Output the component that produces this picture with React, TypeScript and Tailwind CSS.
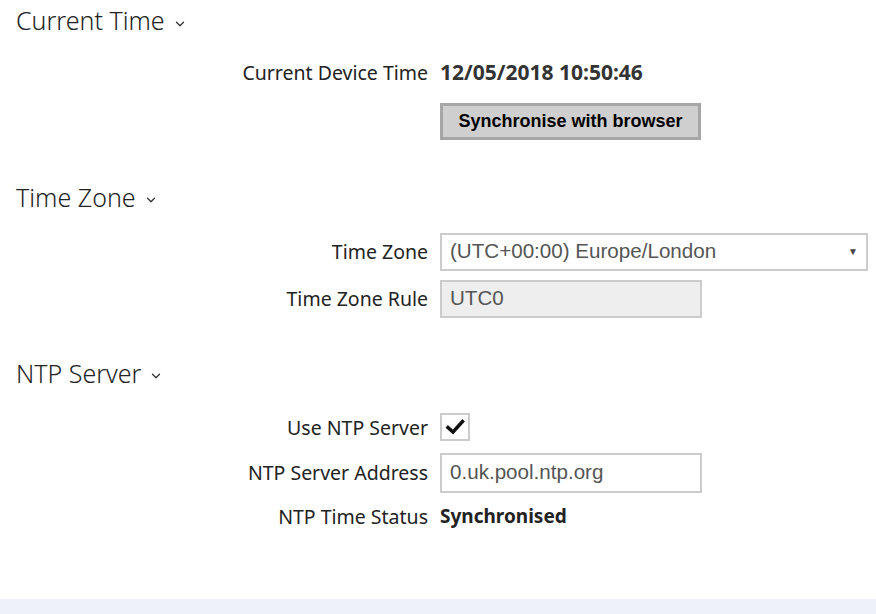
import { ChevronDown } from 'lucide-react'

const label = "w-[440px] shrink-0 pr-3 text-right text-[19.5px] text-[#222]"
const box = "border-2 border-[#cccccc] h-[38px] px-[8px] flex items-center text-[20.6px] text-[#555] font-['Liberation_Sans',Arial,sans-serif]"

function Heading({ title }: { title: string }) {
  return (
    <h2 className="flex items-center gap-2 pl-4 text-[25px] font-light text-[#222] leading-none">
      {title}
      <ChevronDown className="w-3.5 h-3.5 mt-1.5 text-[#333]" strokeWidth={2.2} />
    </h2>
  )
}

function Row({ name, children, className = '' }: { name: string; children: React.ReactNode; className?: string }) {
  return (
    <div className={`flex items-center ${className}`}>
      <div className={label}>{name}</div>
      {children}
    </div>
  )
}

export default function App() {
  return (
    <div className="w-[876px] h-[614px] bg-white flex flex-col font-['Noto_Sans',sans-serif] overflow-hidden">
      <div className="flex-1">
        <div className="pt-[8px]">
          <Heading title="Current Time" />
          <Row name="Current Device Time" className="mt-[24px]">
            <span className="text-[21px] font-bold text-[#333]">12/05/2018 10:50:46</span>
          </Row>
          <Row name="" className="mt-[14px]">
            <button className="w-[261px] h-[37px] bg-[#cfcfcf] border-[3px] border-[#a6a6a6] text-[18px] font-bold text-black font-['Liberation_Sans',Arial,sans-serif]">
              Synchronise with browser
            </button>
          </Row>
        </div>

        <div className="mt-[45px]">
          <Heading title="Time Zone" />
          <Row name="Time Zone" className="mt-[23px]">
            <div className={`${box} w-[428px] justify-between`}>
              <span>(UTC+00:00) Europe/London</span>
              <span className="text-[10px] text-[#444]">▼</span>
            </div>
          </Row>
          <Row name="Time Zone Rule" className="mt-[9px]">
            <div className={`${box} w-[262px] bg-[#eeeeee]`}>UTC0</div>
          </Row>
        </div>

        <div className="mt-[43px]">
          <Heading title="NTP Server" />
          <Row name="Use NTP Server" className="mt-[27px]">
            <div className="w-[30px] h-[28px] border-2 border-[#cccccc] flex items-center justify-center">
              <svg viewBox="0 0 20 20" className="w-[20px] h-[20px]">
                <path d="M3 10.5 L8 15 L17.5 4.5" fill="none" stroke="#111" strokeWidth="3.4" strokeLinecap="square" />
              </svg>
            </div>
          </Row>
          <Row name="NTP Server Address" className="mt-[11px]">
            <div className={`${box} w-[262px] h-[40px]`}>0.uk.pool.ntp.org</div>
          </Row>
          <Row name="NTP Time Status" className="mt-[9px]">
            <span className="text-[19px] font-bold text-[#222]">Synchronised</span>
          </Row>
        </div>
      </div>
      <div className="h-[15px] bg-[#eef2f8] shrink-0" />
    </div>
  )
}
